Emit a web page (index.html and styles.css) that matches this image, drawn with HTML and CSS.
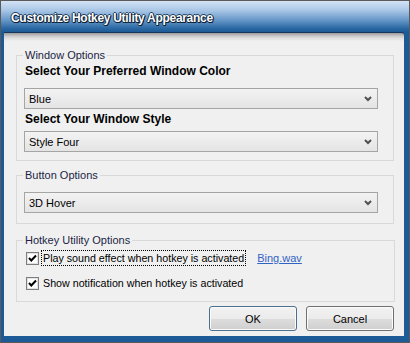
FILE: index.html
```html
<!DOCTYPE html>
<html>

<head>
    <title>Customize Hotkey Utility Appearance</title>
    <link rel="stylesheet" href="styles.css">
</head>

<body>
    <div class="window">
        <div class="titleBar">
            <span class="titleText">Customize Hotkey Utility Appearance</span>
        </div>

        <div class="client">
            <fieldset class="group groupWindow">
                <legend>Window Options</legend>
                <div class="fieldLabel">Select Your Preferred Window Color</div>
                <div class="combo">
                    <span>Blue</span>
                    <svg class="chevron" width="8" height="6" viewBox="0 0 8 6"><path d="M1 1 L4 4 L7 1" fill="none" stroke="#505050" stroke-width="2"/></svg>
                </div>
                <div class="fieldLabel fieldLabel--second">Select Your Window Style</div>
                <div class="combo">
                    <span>Style Four</span>
                    <svg class="chevron" width="8" height="6" viewBox="0 0 8 6"><path d="M1 1 L4 4 L7 1" fill="none" stroke="#505050" stroke-width="2"/></svg>
                </div>
            </fieldset>

            <fieldset class="group groupButton">
                <legend>Button Options</legend>
                <div class="combo">
                    <span>3D Hover</span>
                    <svg class="chevron" width="8" height="6" viewBox="0 0 8 6"><path d="M1 1 L4 4 L7 1" fill="none" stroke="#505050" stroke-width="2"/></svg>
                </div>
            </fieldset>

            <fieldset class="group groupHotkey">
                <legend>Hotkey Utility Options</legend>
                <div class="checkRow">
                    <span class="checkBox">
                        <svg width="11" height="11" viewBox="0 0 11 11"><path d="M2 5 L4.3 7.5 L9 2.5" fill="none" stroke="#000" stroke-width="2"/></svg>
                    </span>
                    <span class="checkText focused">Play sound effect when hotkey is activated</span>
                    <a href="#" class="soundLink">Bing.wav</a>
                </div>
                <div class="checkRow checkRow--second">
                    <span class="checkBox">
                        <svg width="11" height="11" viewBox="0 0 11 11"><path d="M2 5 L4.3 7.5 L9 2.5" fill="none" stroke="#000" stroke-width="2"/></svg>
                    </span>
                    <span class="checkText">Show notification when hotkey is activated</span>
                </div>
            </fieldset>

            <div class="dialogButtons">
                <button class="dialogButton dialogButton--default">OK</button>
                <button class="dialogButton">Cancel</button>
            </div>
        </div>
    </div>
</body>

</html>
```

FILE: styles.css
```css
body {
    margin: 0;
    font-family: 'Liberation Sans', Arial, sans-serif;
    font-size: 11px;
    color: #000;
}

.window {
    width: 410px;
    height: 343px;
    box-sizing: border-box;
    border: 1px solid #5a5a5a;
    background-color: #1c5b97;
    display: flex;
    flex-direction: column;
}

.titleBar {
    height: 31px;
    flex-shrink: 0;
    display: flex;
    align-items: center;
    padding: 2px 0 0 10px;
    box-sizing: border-box;
    background: linear-gradient(to bottom, #d3e3f5 0%, #a9c6e6 30%, #5f92c4 65%, #2a68a3 88%, #1d5b96 100%);
}

.titleText {
    color: #fff;
    font-weight: bold;
    font-size: 12px;
    letter-spacing: -0.3px;
    text-shadow: 1px 1px 0 #0c2136, 1px 0 0 #0c2136, 0 1px 0 #0c2136, -1px 0 0 #1e3f62, 0 -1px 0 #1e3f62;
}

.client {
    flex: 1;
    margin: 0 5px 6px 3px;
    padding: 15px 10px 0 12px;
    border-top: 1px solid #17365c;
    border-radius: 0 3px 0 0;
    background: linear-gradient(to bottom, #9c9c9c 0px, #d6d6d6 4px, #f0f0f0 8px, #f0f0f0 100%);
}

.group {
    margin: 0;
    min-width: 0;
    border: 1px solid #d9d9d9;
    padding: 1px 15px 8px 7px;
}

.group legend {
    padding: 0 2px;
    margin-left: -1px;
    line-height: 14px;
    color: #1b1f45;
}

.groupButton {
    margin-top: 7px;
    padding-top: 10px;
    padding-bottom: 10px;
}

.groupHotkey {
    margin-top: 9px;
    margin-right: -1px;
    padding: 1px 10px 9px 7px;
}

.fieldLabel {
    font-weight: bold;
    font-size: 12px;
    line-height: 16px;
    margin: 0 0 9px 1px;
}

.fieldLabel--second {
    margin-top: 2px;
    margin-bottom: 4px;
}

.combo {
    height: 21px;
    box-sizing: border-box;
    border: 1px solid #a5a5a5;
    background: linear-gradient(to bottom, #f3f3f3, #e4e4e4);
    display: flex;
    align-items: center;
    justify-content: space-between;
    padding: 0 5px 0 4px;
}

.checkRow {
    height: 18px;
    margin-top: 1px;
    display: flex;
    align-items: center;
}

.checkRow--second {
    margin-top: 7px;
}

.checkBox {
    width: 13px;
    height: 13px;
    box-sizing: border-box;
    margin-left: 2px;
    border: 1px solid #7e7e7e;
    background-color: #fff;
    box-shadow: inset 0 0 0 1px #e2e2e2;
    display: flex;
    align-items: center;
    justify-content: center;
}

.checkText {
    margin-left: 2px;
    padding: 1px 1px;
    font-size: 10.7px;
    border: 1px dotted transparent;
}

.checkText.focused {
    border-color: #000;
}

.soundLink {
    margin-left: 11px;
    color: #3063c6;
    text-decoration: underline;
}

.dialogButtons {
    display: flex;
    justify-content: flex-end;
    gap: 9px;
    margin-top: 4px;
}

.dialogButton {
    width: 88px;
    height: 25px;
    font-family: 'Liberation Sans', Arial, sans-serif;
    font-size: 11px;
    color: #000;
    border: 1px solid #707070;
    border-radius: 3px;
    box-shadow: inset 0 0 0 1px #fbfbfb;
    background: linear-gradient(to bottom, #f2f2f2 0%, #ebebeb 50%, #dddddd 51%, #cfcfcf 100%);
    padding: 0;
}

.dialogButton--default {
    border-color: #4c6f8f;
}
```
